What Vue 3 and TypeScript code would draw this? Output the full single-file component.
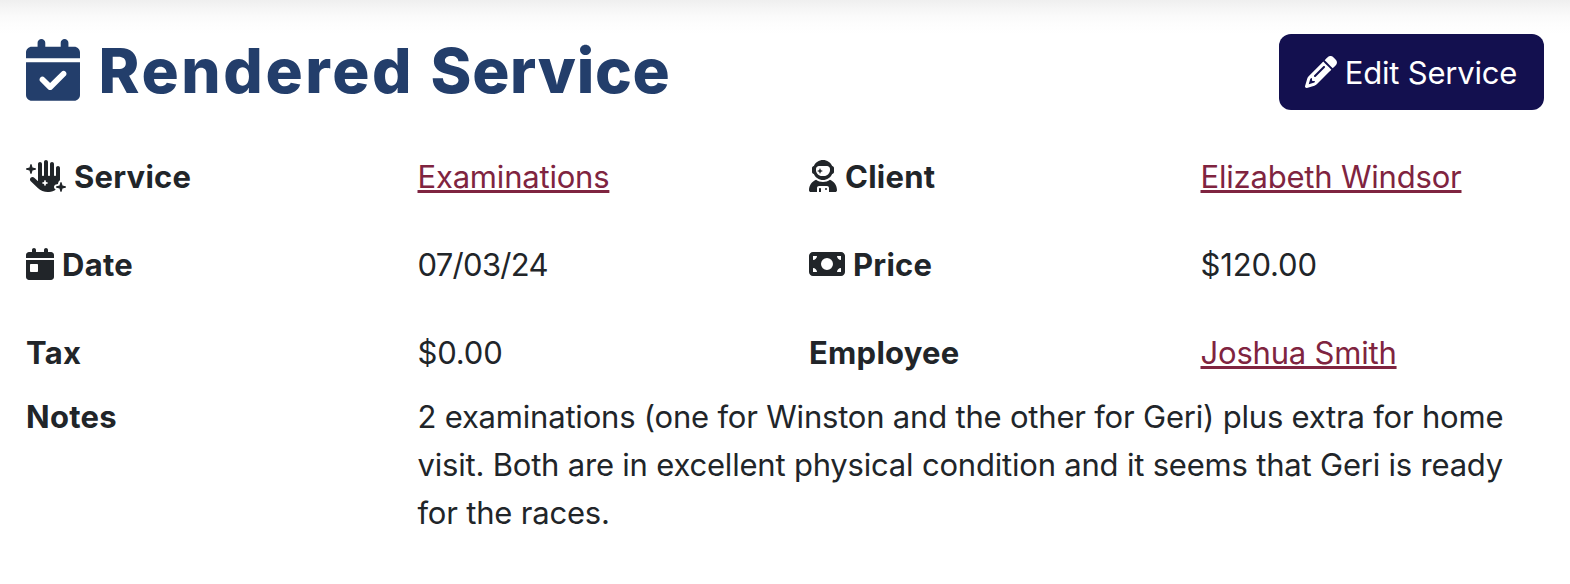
<script setup lang="ts">
interface Icon {
  width: number
  path: string
}

interface Field {
  label: string
  value: string
  icon?: Icon
  link?: boolean
  kind?: 'date' | 'money'
}

const calendarTop =
  'M128 0c17.7 0 32 14.3 32 32V64H288V32c0-17.7 14.3-32 32-32s32 14.3 32 32V64h48c26.5 0 48 21.5 48 48v48H0V112C0 85.5 21.5 64 48 64H96V32c0-17.7 14.3-32 32-32zM0 192H448V464c0 26.5-21.5 48-48 48H48c-26.5 0-48-21.5-48-48V192z'

const calendarCheck: Icon = {
  width: 448,
  path: calendarTop + 'M329 305c9.4-9.4 9.4-24.6 0-33.9s-24.6-9.4-33.9 0l-95 95-47-47c-9.4-9.4-24.6-9.4-33.9 0s-9.4 24.6 0 33.9l64 64c9.4 9.4 24.6 9.4 33.9 0L329 305z',
}

const calendarDay: Icon = {
  width: 448,
  path: calendarTop + 'M80 256c-8.8 0-16 7.2-16 16v96c0 8.8 7.2 16 16 16h96c8.8 0 16-7.2 16-16V272c0-8.8-7.2-16-16-16H80z',
}

const pencil: Icon = {
  width: 512,
  path: 'M410.3 231l11.3-11.3-33.9-33.9-62.1-62.1L291.7 89.8l-11.3 11.3-22.6 22.6L58.6 322.9c-10.4 10.4-18 23.3-22.2 37.4L1 480.7c-2.5 8.4-.2 17.5 6.1 23.7s15.3 8.5 23.7 6.1l120.3-35.4c14.1-4.2 27-11.8 37.4-22.2L387.7 253.7 410.3 231zM160 399.4l-9.1 22.7c-4 3.1-8.5 5.4-13.3 6.9L59.4 452l23-78.1c1.4-4.9 3.8-9.4 6.9-13.3l22.7-9.1v32c0 8.8 7.2 16 16 16h32zM362.7 18.7L348.3 33.2 325.7 55.8 314.3 67.1l33.9 33.9 62.1 62.1 33.9 33.9 11.3-11.3 22.6-22.6 14.5-14.5c25-25 25-65.5 0-90.5L453.3 18.7c-25-25-65.5-25-90.5 0zm-47.4 168l-144 144c-6.2 6.2-16.4 6.2-22.6 0s-6.2-16.4 0-22.6l144-144c6.2-6.2 16.4-6.2 22.6 0s6.2 16.4 0 22.6z',
}

const handSparkles: Icon = {
  width: 640,
  path: 'M320 0c17.7 0 32 14.3 32 32V240c0 8.8 7.2 16 16 16s16-7.2 16-16V64c0-17.7 14.3-32 32-32s32 14.3 32 32V240c0 8.8 7.2 16 16 16s16-7.2 16-16V128c0-17.7 14.3-32 32-32s32 14.3 32 32V323.1c-11.9 4.8-21.3 14.9-25 27.8l-8.9 31.2L478.9 391C460.6 396.3 448 413 448 432c0 18.9 12.5 35.6 30.6 40.9C448.4 497.4 409.9 512 368 512H348.8c-59.6 0-116.9-22.9-160-64L76.4 341c-16-15.2-16.6-40.6-1.4-56.6s40.6-16.6 56.6-1.4l60.5 57.6c0-1.5-.1-3.1-.1-4.6V64c0-17.7 14.3-32 32-32s32 14.3 32 32V240c0 8.8 7.2 16 16 16s16-7.2 16-16V32c0-17.7 14.3-32 32-32zm-7.3 326.6c-1.1-3.9-4.7-6.6-8.7-6.6s-7.6 2.7-8.7 6.6L288 352l-25.4 7.3c-3.9 1.1-6.6 4.7-6.6 8.7s2.7 7.6 6.6 8.7L288 384l7.3 25.4c1.1 3.9 4.7 6.6 8.7 6.6s7.6-2.7 8.7-6.6L320 384l25.4-7.3c3.9-1.1 6.6-4.7 6.6-8.7s-2.7-7.6-6.6-8.7L320 352l-7.3-25.4zM104 120l48.3 13.8c4.6 1.3 7.7 5.5 7.7 10.2s-3.1 8.9-7.7 10.2L104 168 90.2 216.3c-1.3 4.6-5.5 7.7-10.2 7.7s-8.9-3.1-10.2-7.7L56 168 7.7 154.2C3.1 152.9 0 148.7 0 144s3.1-8.9 7.7-10.2L56 120 69.8 71.7C71.1 67.1 75.3 64 80 64s8.9 3.1 10.2 7.7L104 120zM584 408l48.3 13.8c4.6 1.3 7.7 5.5 7.7 10.2s-3.1 8.9-7.7 10.2L584 456l-13.8 48.3c-1.3 4.6-5.5 7.7-10.2 7.7s-8.9-3.1-10.2-7.7L536 456l-48.3-13.8c-4.6-1.3-7.7-5.5-7.7-10.2s3.1-8.9 7.7-10.2L536 408l13.8-48.3c1.3-4.6 5.5-7.7 10.2-7.7s8.9 3.1 10.2 7.7L584 408z',
}

const astronaut: Icon = {
  width: 448,
  path: 'M370.7 96.1C346.1 39.5 289.7 0 224 0S101.9 39.5 77.3 96.1C60.9 97.5 48 111.2 48 128v64c0 16.8 12.9 30.5 29.3 31.9C101.9 280.5 158.3 320 224 320s122.1-39.5 146.7-96.1c16.4-1.4 29.3-15.1 29.3-31.9V128c0-16.8-12.9-30.5-29.3-31.9zM336 144v16c0 53-43 96-96 96H208c-53 0-96-43-96-96V144c0-26.5 21.5-48 48-48H288c26.5 0 48 21.5 48 48zM189.3 162.7l-6-21.2c-.9-3.3-3.9-5.5-7.3-5.5s-6.4 2.2-7.3 5.5l-6 21.2-21.2 6c-3.3 .9-5.5 3.9-5.5 7.3s2.2 6.4 5.5 7.3l21.2 6 6 21.2c.9 3.3 3.9 5.5 7.3 5.5s6.4-2.2 7.3-5.5l6-21.2 21.2-6c3.3-.9 5.5-3.9 5.5-7.3s-2.2-6.4-5.5-7.3l-21.2-6zM112.7 316.5C46.7 342.6 0 407 0 482.3C0 498.7 13.3 512 29.7 512H128V448c0-17.7 14.3-32 32-32H288c17.7 0 32 14.3 32 32v64l98.3 0c16.4 0 29.7-13.3 29.7-29.7c0-75.3-46.7-139.7-112.7-165.8C303.9 338.8 265.5 352 224 352s-79.9-13.2-111.3-35.5zM176 448c-8.8 0-16 7.2-16 16v48h32V464c0-8.8-7.2-16-16-16zm96 32a16 16 0 1 0 0-32 16 16 0 1 0 0 32z',
}

const moneyBill: Icon = {
  width: 576,
  path: 'M64 64C28.7 64 0 92.7 0 128V384c0 35.3 28.7 64 64 64H512c35.3 0 64-28.7 64-64V128c0-35.3-28.7-64-64-64H64zm64 320H64V320c35.3 0 64 28.7 64 64zM64 192V128h64c0 35.3-28.7 64-64 64zM448 384c0-35.3 28.7-64 64-64v64H448zm64-192c-35.3 0-64-28.7-64-64h64v64zM288 160a96 96 0 1 1 0 192 96 96 0 1 1 0-192z',
}

const fields: Field[] = [
  { label: 'Service', value: 'Examinations', icon: handSparkles, link: true },
  { label: 'Client', value: 'Elizabeth Windsor', icon: astronaut, link: true },
  { label: 'Date', value: '07/03/24', icon: calendarDay, kind: 'date' },
  { label: 'Price', value: '$120.00', icon: moneyBill, kind: 'money' },
  { label: 'Tax', value: '$0.00', kind: 'money' },
  { label: 'Employee', value: 'Joshua Smith', link: true },
]

const notes =
  '2 examinations (one for Winston and the other for Geri) plus extra for home visit. Both are in excellent physical condition and it seems that Geri is ready for the races.'
</script>

<template>
  <main class="page">
    <header class="header">
      <h1 class="title">
        <svg class="title-icon" :viewBox="`0 0 ${calendarCheck.width} 512`" fill-rule="evenodd" aria-hidden="true">
          <path :d="calendarCheck.path" />
        </svg>
        <span class="title-text"><span class="wide">Rendered</span> <span class="tight">Service</span></span>
      </h1>
      <button class="edit" type="button">
        <svg class="icon" :viewBox="`0 0 ${pencil.width} 512`" fill-rule="evenodd" aria-hidden="true">
          <path :d="pencil.path" />
        </svg>
        <span class="edit-text">Edit Service</span>
      </button>
    </header>

    <dl class="details">
      <template v-for="field in fields" :key="field.label">
        <dt class="label">
          <svg v-if="field.icon" class="icon" :viewBox="`0 0 ${field.icon.width} 512`" fill-rule="evenodd" aria-hidden="true">
            <path :d="field.icon.path" />
          </svg>
          <span>{{ field.label }}</span>
        </dt>
        <dd class="value" :class="field.kind">
          <a v-if="field.link" class="link" href="#">{{ field.value }}</a>
          <template v-else>{{ field.value }}</template>
        </dd>
      </template>
    </dl>

    <dl class="notes">
      <dt class="label">Notes</dt>
      <dd class="value">{{ notes }}</dd>
    </dl>
  </main>
</template>

<style>
body {
  margin: 0;
  background: #fff;
}
</style>

<style scoped>
.page {
  box-sizing: border-box;
  height: 584px;
  padding: 34px 26px 0;
  overflow: hidden;
  background: linear-gradient(#efefef 0, #f5f5f5 8px, #fafafa 16px, #fdfdfd 24px, #fff 34px);
  color: #212529;
  font: 400 31px/48px Inter, 'Liberation Sans', sans-serif;
  letter-spacing: -0.2px;
}

.header {
  display: flex;
  justify-content: space-between;
  height: 76px;
}

.title {
  display: flex;
  align-items: center;
  gap: 18.5px;
  margin: 0;
  color: #233e6b;
  font-size: 62px;
  font-weight: 800;
  line-height: 74px;
}

.title-icon {
  width: 54px;
  height: 61.7px;
  margin-top: -4px;
  fill: currentColor;
}

.title-text {
  padding-bottom: 3px;
  word-spacing: 3px;
}

.wide {
  letter-spacing: 2.6px;
}

.tight {
  letter-spacing: 0.7px;
}

.edit {
  display: flex;
  align-items: center;
  justify-content: center;
  gap: 8px;
  box-sizing: border-box;
  width: 265px;
  padding: 0 1px 0 0;
  border: 0;
  border-radius: 12px;
  background: #13104f;
  color: #fff;
  font: inherit;
  letter-spacing: -0.2px;
}

.edit-text {
  padding-top: 2px;
}

.icon {
  flex: none;
  height: 32px;
  fill: currentColor;
}

.details,
.notes {
  display: grid;
  grid-template-columns: repeat(4, 391.5px);
  margin: 43px 0 0;
}

.details {
  row-gap: 40px;
}

.notes {
  margin-top: 16px;
}

.notes .value {
  grid-column: 2 / 4;
  width: 1110px;
}

.label {
  display: flex;
  align-items: center;
  align-self: start;
  gap: 8px;
  font-weight: 700;
  letter-spacing: 0.25px;
}

.label .icon {
  margin-top: -2px;
}

.value {
  margin: 0;
}

.date {
  letter-spacing: -0.7px;
}

.money {
  letter-spacing: -0.15px;
}

.link {
  color: #7f2440;
  text-decoration: underline;
  text-decoration-thickness: 3px;
  text-underline-offset: 2px;
}
</style>
